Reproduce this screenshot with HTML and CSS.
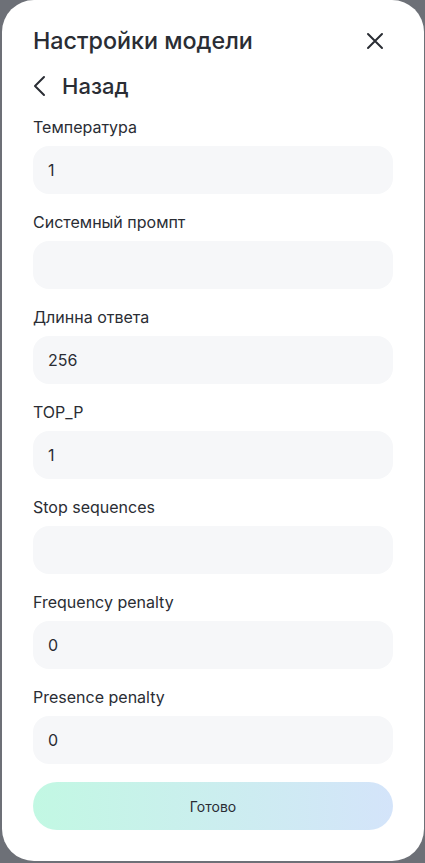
FILE: index.html
```html
<!DOCTYPE html>
<html lang="ru">
<head>
<meta charset="utf-8">
<link rel="stylesheet" href="styles.css">
</head>
<body>
<div class="card">
  <div class="header">
    <h1 class="title">Настройки модели</h1>
    <button class="close" aria-label="Закрыть">
      <svg width="18" height="18" viewBox="0 0 18 18"><path d="M2 2L16 16M16 2L2 16" stroke="#2a2d34" stroke-width="2" stroke-linecap="round"/></svg>
    </button>
  </div>
  <div class="back">
    <svg width="16" height="22" viewBox="0 0 16 22"><path d="M12 2L3 11L12 20" fill="none" stroke="#2a2d34" stroke-width="2" stroke-linecap="round" stroke-linejoin="round"/></svg>
    <span>Назад</span>
  </div>
  <div class="fields">
    <div class="field"><div class="label">Температура</div><div class="input">1</div></div>
    <div class="field"><div class="label">Системный промпт</div><div class="input"></div></div>
    <div class="field"><div class="label">Длинна ответа</div><div class="input">256</div></div>
    <div class="field"><div class="label">TOP_P</div><div class="input">1</div></div>
    <div class="field"><div class="label">Stop sequences</div><div class="input"></div></div>
    <div class="field"><div class="label">Frequency penalty</div><div class="input">0</div></div>
    <div class="field"><div class="label">Presence penalty</div><div class="input">0</div></div>
  </div>
  <button class="done">Готово</button>
</div>
</body>
</html>
```
FILE: styles.css
```css
* { box-sizing: border-box; }
html, body { margin: 0; padding: 0; }
body {
  background: #6d7077;
  font-family: Inter, "Noto Sans", sans-serif;
  color: #2a2d34;
  width: 425px;
  height: 863px;
  overflow: hidden;
}
.card {
  margin-left: 2px;
  width: 422px;
  height: 861px;
  background: #fff;
  border-radius: 32px;
  padding: 24px 31px 0 31px;
  display: flex;
  flex-direction: column;
}
.header {
  height: 34px;
  display: flex;
  align-items: center;
  justify-content: space-between;
}
.title {
  margin: 0;
  font-size: 23.3px;
  font-weight: 500;
  line-height: 34px;
}
.close {
  border: 0;
  background: none;
  padding: 0;
  width: 18px;
  height: 18px;
  margin-right: 9px;
  display: flex;
}
.back {
  margin-top: 12px;
  height: 32px;
  display: flex;
  align-items: center;
  gap: 14px;
  font-size: 22px;
  font-weight: 500;
}
.back svg { margin-left: -1px; }
.fields {
  margin-top: 15px;
  display: flex;
  flex-direction: column;
  gap: 18px;
}
.field {
  display: flex;
  flex-direction: column;
  gap: 9px;
}
.label {
  font-size: 16px;
  line-height: 20px;
}
.input {
  height: 48px;
  background: #f6f7f9;
  border-radius: 16px;
  padding: 0 15px;
  display: flex;
  align-items: center;
  font-size: 16px;
}
.done {
  margin-top: 18px;
  height: 48px;
  border: 0;
  border-radius: 24px;
  background: linear-gradient(90deg, #c2f8e3 0%, #d4e4fa 100%);
  font-family: Inter, "Noto Sans", sans-serif;
  font-size: 14px;
  color: #2a2d34;
}
```
